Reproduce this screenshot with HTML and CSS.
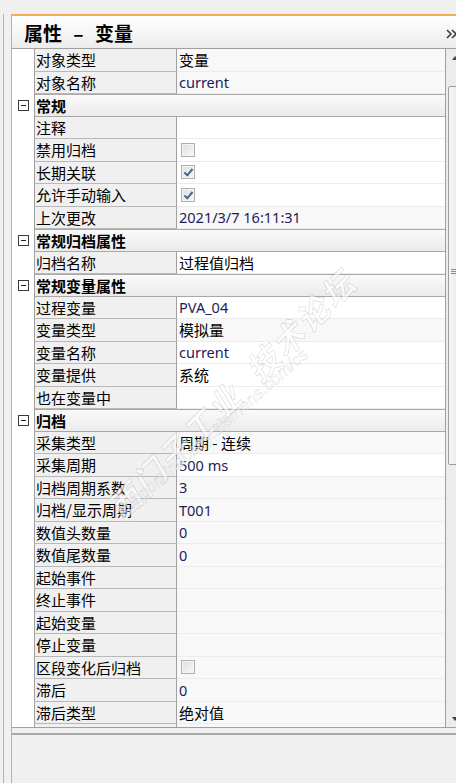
FILE: index.html
```html
<!DOCTYPE html>
<html lang="zh-CN">
<head>
    <meta charset="UTF-8">
    <meta name="viewport" content="width=device-width, initial-scale=1.0">
    <title>属性 - 变量</title>
    <link rel="stylesheet" href="styles.css">
</head>
<body>
    <div class="window">
        <div class="side-strip"></div>
        <div class="panel">
            <div class="panel-header">
                <span class="title">属性 – 变量</span>
                <svg class="chevron" width="12" height="10" viewBox="0 0 12 10">
                    <path d="M1 1 L5 5 L1 9 M6 1 L10 5 L6 9" fill="none" stroke="#3c3c3c" stroke-width="1.6"/>
                </svg>
            </div>

            <div class="grid-wrap">
                <div class="grid">
                    <div class="row"><div class="gutter"></div><div class="name">对象类型</div><div class="value ro">变量</div></div>
                    <div class="row"><div class="gutter"></div><div class="name">对象名称</div><div class="value ro latin">current</div></div>

                    <div class="row cat"><div class="gutter"><span class="toggle"></span></div><div class="cat-label">常规</div></div>
                    <div class="row"><div class="gutter"></div><div class="name">注释</div><div class="value"></div></div>
                    <div class="row"><div class="gutter"></div><div class="name">禁用归档</div><div class="value"><span class="check"></span></div></div>
                    <div class="row"><div class="gutter"></div><div class="name">长期关联</div><div class="value"><span class="check on"></span></div></div>
                    <div class="row"><div class="gutter"></div><div class="name">允许手动输入</div><div class="value"><span class="check on"></span></div></div>
                    <div class="row"><div class="gutter"></div><div class="name">上次更改</div><div class="value ro latin">2021/3/7 16:11:31</div></div>

                    <div class="row cat"><div class="gutter"><span class="toggle"></span></div><div class="cat-label">常规归档属性</div></div>
                    <div class="row"><div class="gutter"></div><div class="name">归档名称</div><div class="value">过程值归档</div></div>

                    <div class="row cat"><div class="gutter"><span class="toggle"></span></div><div class="cat-label">常规变量属性</div></div>
                    <div class="row"><div class="gutter"></div><div class="name">过程变量</div><div class="value latin">PVA_04</div></div>
                    <div class="row"><div class="gutter"></div><div class="name">变量类型</div><div class="value ro">模拟量</div></div>
                    <div class="row"><div class="gutter"></div><div class="name">变量名称</div><div class="value latin">current</div></div>
                    <div class="row"><div class="gutter"></div><div class="name">变量提供</div><div class="value">系统</div></div>
                    <div class="row"><div class="gutter"></div><div class="name">也在变量中</div><div class="value"></div></div>

                    <div class="row cat"><div class="gutter"><span class="toggle"></span></div><div class="cat-label">归档</div></div>
                    <div class="row"><div class="gutter"></div><div class="name">采集类型</div><div class="value ro">周期 - 连续</div></div>
                    <div class="row"><div class="gutter"></div><div class="name">采集周期</div><div class="value latin">500 ms</div></div>
                    <div class="row"><div class="gutter"></div><div class="name">归档周期系数</div><div class="value ro latin">3</div></div>
                    <div class="row"><div class="gutter"></div><div class="name">归档/显示周期</div><div class="value ro latin">T001</div></div>
                    <div class="row"><div class="gutter"></div><div class="name">数值头数量</div><div class="value ro latin">0</div></div>
                    <div class="row"><div class="gutter"></div><div class="name">数值尾数量</div><div class="value ro latin">0</div></div>
                    <div class="row"><div class="gutter"></div><div class="name">起始事件</div><div class="value ro"></div></div>
                    <div class="row"><div class="gutter"></div><div class="name">终止事件</div><div class="value ro"></div></div>
                    <div class="row"><div class="gutter"></div><div class="name">起始变量</div><div class="value ro"></div></div>
                    <div class="row"><div class="gutter"></div><div class="name">停止变量</div><div class="value ro"></div></div>
                    <div class="row"><div class="gutter"></div><div class="name">区段变化后归档</div><div class="value ro"><span class="check"></span></div></div>
                    <div class="row"><div class="gutter"></div><div class="name">滞后</div><div class="value ro latin">0</div></div>
                    <div class="row"><div class="gutter"></div><div class="name">滞后类型</div><div class="value ro">绝对值</div></div>
                    <!-- next row only peeks in under the bottom edge -->
                    <div class="row"><div class="gutter"></div><div class="name"></div><div class="value ro"></div></div>
                </div>

                <div class="scrollbar">
                    <div class="sb-inner">
                        <div class="sb-btn"><span class="arrow-up"></span></div>
                        <div class="sb-track">
                            <div class="sb-thumb"><span class="grip"></span></div>
                        </div>
                        <div class="sb-btn"><span class="arrow-down"></span></div>
                    </div>
                </div>

                <div class="watermark">
                    <span class="wm-big">西门子工业&nbsp;&nbsp;技术论坛</span>
                    <span class="wm-small">support.industry.siemens.com/cs</span>
                </div>
            </div>

            <div class="panel-footer"></div>
        </div>
    </div>
</body>
</html>
```

FILE: styles.css
```css
body {
    margin: 0;
    width: 456px;
    height: 783px;
    overflow: hidden;
    background-color: #f0f0f0;
    font-family: "Noto Sans", "Noto Sans CJK SC", sans-serif;
    color: #000;
}
.window {
    display: flex;
    height: 783px;
    padding-top: 14px;
    box-sizing: border-box;
}
.side-strip {
    width: 6px;
    margin-left: 3px;
    margin-right: 1px;
    border-left: 1px solid #b4b4b4;
}
.panel {
    flex: 1;
    display: flex;
    flex-direction: column;
    min-width: 0;
    border-top: 2px solid #f2ad55;
    border-left: 1px solid #f0a848;
}
.panel-header {
    height: 32px;
    display: flex;
    align-items: center;
    justify-content: space-between;
    padding-left: 12px;
    background: linear-gradient(#ffffff, #ececec);
}
.title {
    font-family: "Noto Sans CJK SC", sans-serif;
    font-size: 19px;
    font-weight: bold;
    word-spacing: 7px;
    line-height: 1;
    margin-top: 1px;
}
.chevron {
    margin-right: -2px;
    margin-top: 3px;
}
.grid-wrap {
    position: relative;
    display: flex;
    height: 678px;
    border-top: 1px solid #a0a0a0;
    border-bottom: 1px solid #a0a0a0;
    overflow: hidden;
}
.grid {
    flex: 1;
    min-width: 0;
    border-right: 1px solid #a0a0a0;
    background: #fff;
}
.row {
    display: grid;
    grid-template-columns: 22px 143px 1fr;
    height: 22.5px;
    font-size: 15px;
}
.gutter {
    background: #fff;
    display: flex;
    align-items: center;
    justify-content: center;
}
.name {
    display: flex;
    align-items: center;
    padding-left: 1px;
    background: #f0f0f0;
    border-left: 1px solid #a0a0a0;
    border-right: 1px solid #a0a0a0;
    border-bottom: 1px solid #b8b8b8;
    font-family: "Noto Sans CJK SC", sans-serif;
    white-space: nowrap;
    overflow: hidden;
}
.value {
    display: flex;
    align-items: center;
    padding-left: 2px;
    background: #fff;
    border-bottom: 1px solid #ececec;
    font-family: "Noto Sans CJK SC", sans-serif;
    white-space: nowrap;
    overflow: hidden;
}
.value.ro {
    background: #f8f8f8;
}
.value.latin {
    font-family: "Noto Sans", sans-serif;
    font-size: 14.5px;
    color: #1c1c58;
}
.cat .cat-label {
    grid-column: span 2;
    display: flex;
    align-items: center;
    padding-left: 1px;
    border-left: 1px solid #a0a0a0;
    border-top: 1px solid #a8a8a8;
    border-bottom: 1px solid #a8a8a8;
    background: linear-gradient(#fafafa, #ebebeb);
    font-family: "Noto Sans CJK SC", sans-serif;
    font-weight: bold;
}
.toggle {
    position: relative;
    width: 9px;
    height: 9px;
    border: 1px solid #3a3a3a;
    background: #fff;
}
.toggle::after {
    content: "";
    position: absolute;
    left: 2px;
    right: 2px;
    top: 4px;
    height: 1px;
    background: #222;
}
.check {
    position: relative;
    width: 12px;
    height: 12px;
    margin-left: 2px;
    border: 1px solid #b0b0b0;
    background: linear-gradient(135deg, #dedede, #f8f8f8);
    box-shadow: inset 0 0 0 1px #f4f4f4;
}
.check.on::after {
    content: "";
    position: absolute;
    left: 4px;
    top: 1px;
    width: 3px;
    height: 7px;
    border-right: 2px solid #4d6790;
    border-bottom: 2px solid #4d6790;
    transform: rotate(40deg);
}
.scrollbar {
    width: 10px;
    overflow: hidden;
    background: #ececec;
}
.sb-inner {
    width: 17px;
    height: 100%;
    display: flex;
    flex-direction: column;
}
.sb-btn {
    height: 17px;
    display: flex;
    align-items: center;
    justify-content: center;
}
.arrow-up {
    border-left: 3.5px solid transparent;
    border-right: 3.5px solid transparent;
    border-bottom: 4px solid #444;
}
.arrow-down {
    border-left: 3.5px solid transparent;
    border-right: 3.5px solid transparent;
    border-top: 4px solid #444;
}
.sb-track {
    flex: 1;
    padding-top: 20px;
}
.sb-thumb {
    height: 377px;
    margin-left: 2px;
    border: 1px solid #9c9c9c;
    border-radius: 2px;
    background: linear-gradient(to right, #f6f6f6, #e4e4e4);
    display: flex;
    align-items: center;
    justify-content: center;
}
.grip {
    width: 6px;
    height: 5px;
    margin-left: -4px;
    margin-top: -8px;
    background: repeating-linear-gradient(#8a8a8a 0 1px, transparent 1px 2px);
}
.watermark {
    position: absolute;
    inset: 0;
    pointer-events: none;
}
.wm-big {
    position: absolute;
    left: 100px;
    top: 440px;
    transform-origin: left center;
    transform: rotate(-45deg);
    font-family: "Noto Sans CJK SC", sans-serif;
    font-size: 32px;
    font-weight: bold;
    font-style: italic;
    letter-spacing: 3px;
    white-space: nowrap;
    color: rgba(255, 255, 255, 0.6);
    -webkit-text-stroke: 0.8px rgba(0, 0, 0, 0.14);
}
.wm-small {
    position: absolute;
    left: 108px;
    top: 455px;
    transform-origin: left center;
    transform: rotate(-41deg);
    font-family: "Liberation Sans", sans-serif;
    font-size: 17px;
    font-style: italic;
    white-space: nowrap;
    color: rgba(255, 255, 255, 0.6);
    -webkit-text-stroke: 0.6px rgba(0, 0, 0, 0.14);
}
.panel-footer {
    flex: 1;
    margin-top: 5px;
    border-top: 2px solid #a8a8a8;
    background: #f0f0f0;
}
```
